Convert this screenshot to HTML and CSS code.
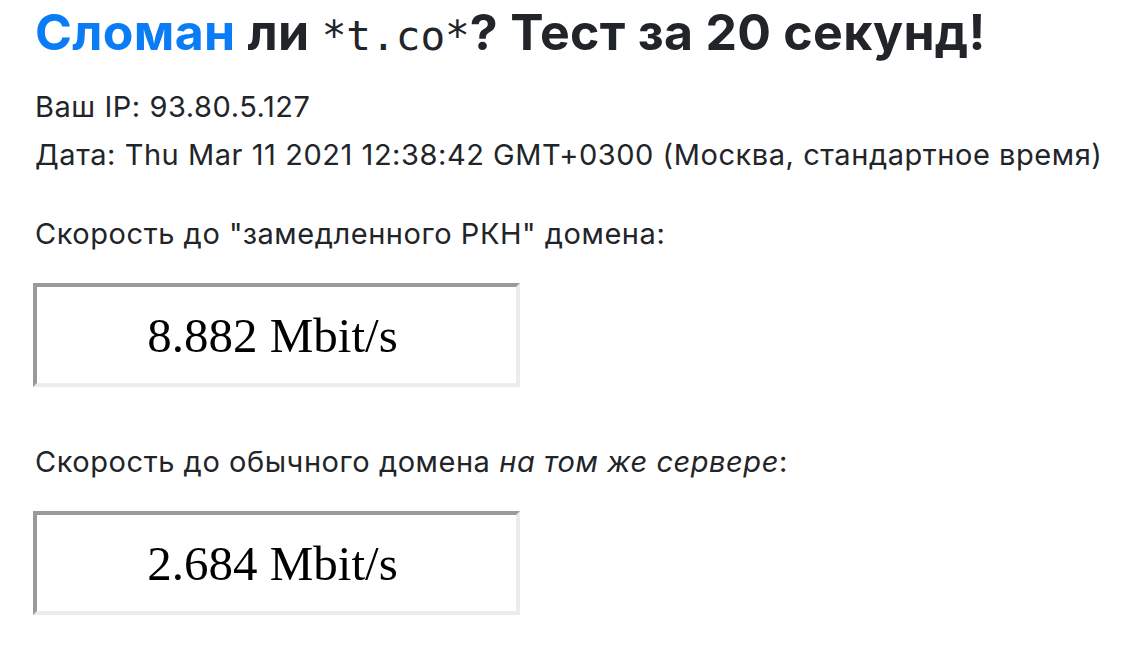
FILE: index.html
```html
<!DOCTYPE html>
<html lang="ru">
<head>
  <meta charset="UTF-8">
  <title>Сломан ли t.co?</title>
  <link rel="stylesheet" href="styles.css">
</head>
<body>
  <h1 class="title"><span class="accent">Сломан</span> ли <code>*t.co*</code>? Тест за 20 секунд!</h1>

  <div class="info">
    <div>Ваш IP: 93.80.5.127</div>
    <div>Дата: Thu Mar 11 2021 12:38:42 GMT+0300 (Москва, стандартное время)</div>
  </div>

  <p class="label">Скорость до "замедленного РКН" домена:</p>
  <div class="speed">8.882 Mbit/s</div>

  <p class="label">Скорость до обычного домена <em>на том же сервере</em>:</p>
  <div class="speed">2.684 Mbit/s</div>
</body>
</html>
```

FILE: styles.css
```css
body {
  margin: 0;
  padding: 0 8px 0 35px;
  font-family: Inter, "Noto Sans", sans-serif;
  font-size: 29px;
  letter-spacing: 0.55px;
  color: #212529;
  background: #fff;
}
.title {
  margin: 0;
  font-size: 50px;
  font-weight: 700;
  line-height: 65px;
  letter-spacing: 0.3px;
}
.accent {
  color: #0a7cf6;
}
.title code {
  font-family: "DejaVu Sans Mono", "Liberation Mono", monospace;
  font-weight: 400;
  font-size: 41px;
  letter-spacing: 0;
}
.info {
  margin: 14px 0 31px;
  line-height: 48px;
  white-space: nowrap;
}
.label {
  margin: 0 0 25px;
  line-height: 48px;
}
.speed {
  width: 471px;
  height: 96px;
  margin: 0 0 51px -2px;
  padding-right: 8px;
  border-style: solid;
  border-width: 4px;
  border-color: #9a9a9a #ececec #ececec #9a9a9a;
  font-family: "Liberation Serif", serif;
  font-size: 49px;
  letter-spacing: 0;
  color: #000;
  display: flex;
  align-items: center;
  justify-content: center;
}
```
